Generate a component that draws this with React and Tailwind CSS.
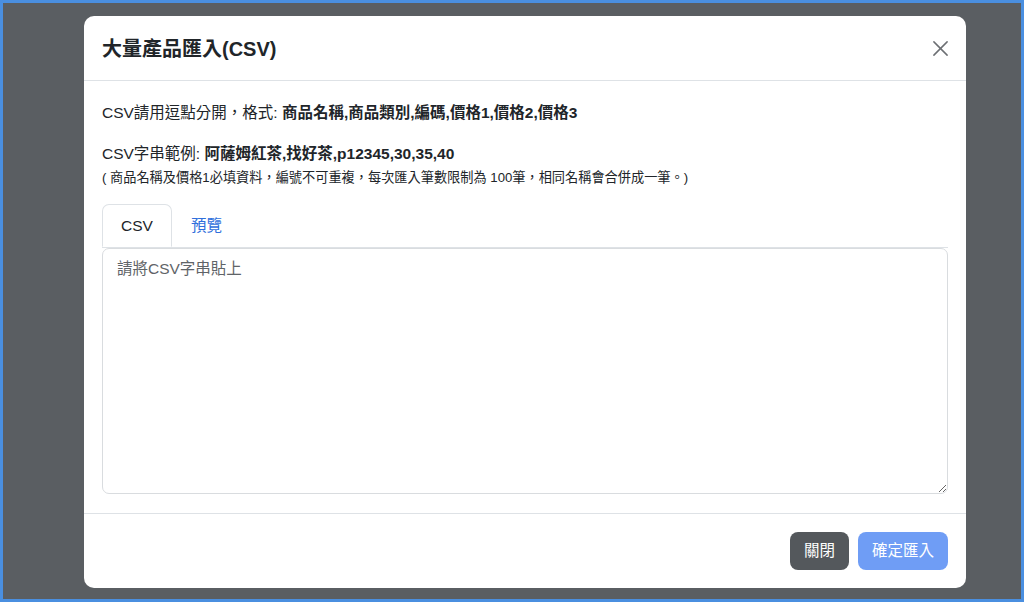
import { useState } from 'react';

const FONT = '"Liberation Sans", "Noto Sans CJK TC", sans-serif';

export default function App() {
  const [tab, setTab] = useState('csv');
  const [csv, setCsv] = useState('');

  return (
    <div className="w-[1024px] h-[602px] border-[3px] border-[#4a8fe0] bg-[#5a5e62] flex items-start pl-[81px] pt-[13px]" style={{ fontFamily: FONT }}>
      <div className="w-[882px] h-[572px] bg-white rounded-[10px] flex flex-col text-[#212529]">
        <div className="h-[65px] shrink-0 flex items-center justify-between pl-[18px] pr-[10px] border-b border-[#dee2e6]">
          <h1 className="text-[20px] font-bold leading-none mt-[1px]">大量產品匯入(CSV)</h1>
          <button type="button" className="w-[32px] h-[32px] flex items-center justify-center text-[#6c6f73] mt-[1px]">
            <svg width="17" height="17" viewBox="0 0 18 18" fill="none" stroke="currentColor" strokeWidth="1.6" strokeLinecap="round">
              <path d="M2 2L16 16M16 2L2 16" />
            </svg>
          </button>
        </div>

        <div className="flex-1 flex flex-col px-[18px] pt-[21px] pb-[17px]">
          <p className="text-[15.5px] leading-[22px]">
            CSV請用逗點分開，格式: <b>商品名稱,商品類別,編碼,價格1,價格2,價格3</b>
          </p>
          <p className="text-[15.5px] leading-[22px] mt-[19px]">
            CSV字串範例: <b>阿薩姆紅茶,找好茶,p12345,30,35,40</b>
          </p>
          <p className="text-[13.2px] leading-[20px] mt-[3px]">
            ( 商品名稱及價格1必填資料，編號不可重複，每次匯入筆數限制為 100筆，相同名稱會合併成一筆。)
          </p>

          <div className="mt-[16px] flex border-b border-[#dee2e6]">
            <button
              type="button"
              onClick={() => setTab('csv')}
              className={tab === 'csv'
                ? 'h-[43px] px-[18px] text-[15.5px] rounded-t-[7px] border border-[#dee2e6] border-b-white -mb-px bg-white'
                : 'h-[43px] px-[18px] text-[15.5px] text-[#2f6fdc] border border-transparent'}
            >
              CSV
            </button>
            <button
              type="button"
              onClick={() => setTab('preview')}
              className={tab === 'preview'
                ? 'h-[43px] px-[18px] text-[15.5px] rounded-t-[7px] border border-[#dee2e6] border-b-white -mb-px bg-white'
                : 'h-[43px] px-[18px] text-[15.5px] text-[#2f6fdc] border border-transparent'}
            >
              預覽
            </button>
          </div>

          <textarea
            value={csv}
            onChange={(e) => setCsv(e.target.value)}
            placeholder="請將CSV字串貼上"
            className="h-[246px] w-full border border-[#d9dcdf] rounded-[7px] px-[14px] py-[9px] text-[15.5px] leading-[22px] placeholder:text-[#5f6468] outline-none"
            style={{ fontFamily: FONT }}
          />
        </div>

        <div className="h-[75px] shrink-0 border-t border-[#dee2e6] flex items-center justify-end gap-[9px] px-[18px]">
          <button type="button" className="h-[38px] px-[14px] rounded-[8px] bg-[#54585c] text-white text-[15.5px]">關閉</button>
          <button type="button" disabled className="h-[38px] px-[14px] rounded-[8px] bg-[#6f9df5] text-white text-[15.5px]">確定匯入</button>
        </div>
      </div>
    </div>
  );
}
